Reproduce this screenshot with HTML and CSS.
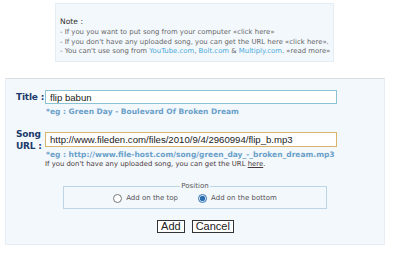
FILE: index.html
```html
<!DOCTYPE html>
<html lang="en">

<head>
    <meta charset="UTF-8">
    <title>Add Song</title>
    <link rel="stylesheet" href="styles.css">
</head>

<body>
    <div class="note">
        <div class="note-title">Note :</div>
        <div class="note-line">- If you you want to put song from your computer &laquo;click here&raquo;</div>
        <div class="note-line">- If you don't have any uploaded song, you can get the URL here &laquo;click here&raquo;.</div>
        <div class="note-line">- You can't use song from <span class="site">YouTube.com</span>, <span class="site">Bolt.com</span> &amp; <span class="site">Multiply.com</span>. &laquo;read more&raquo;</div>
    </div>

    <form class="box" action="#">
        <div class="row">
            <label class="label" for="title">Title :</label>
            <div class="field">
                <input type="text" id="title" class="input" value="flip babun">
                <div class="eg">*eg : Green Day - Boulevard Of Broken Dream</div>
            </div>
        </div>

        <div class="row row-song">
            <label class="label" for="url">Song<br>URL :</label>
            <div class="field">
                <input type="text" id="url" class="input input-focus" value="http://www.fileden.com/files/2010/9/4/2960994/flip_b.mp3">
                <div class="eg">*eg : http://www.file-host.com/song/green_day_-_broken_dream.mp3</div>
                <div class="hint">If you don't have any uploaded song, you can get the URL <u>here</u>.</div>
            </div>
        </div>

        <fieldset class="position">
            <legend>Position</legend>
            <label class="opt"><input type="radio" name="pos"> Add on the top</label>
            <label class="opt"><input type="radio" name="pos" checked> Add on the bottom</label>
        </fieldset>

        <div class="buttons">
            <button type="button" class="btn">Add</button>
            <button type="button" class="btn">Cancel</button>
        </div>
    </form>
</body>

</html>
```

FILE: styles.css
```css
body {
    margin: 0;
    background: #fff;
    font-family: "DejaVu Sans", Verdana, sans-serif;
}

.note {
    box-sizing: border-box;
    margin: 3px 0 0 55px;
    width: 279px;
    height: 59px;
    padding: 13px 0 0 4px;
    background: #f3f8fd;
    border: 1px solid #e4ecf4;
    font-size: 6.9px;
    line-height: 9.3px;
    color: #666;
}

.note-title {
    margin-bottom: 2px;
    font-size: 7.6px;
    color: #333;
}

.site {
    color: #4aa8d8;
}

.box {
    box-sizing: border-box;
    margin: 16px 0 0 5px;
    width: 380px;
    height: 167px;
    padding: 11px 0 0 10px;
    background: #f3f8fd;
    border: 1px solid #e8eef4;
    border-top-color: #d8dee4;
}

.row {
    display: flex;
}

.row-song {
    margin-top: 15px;
}

.label {
    flex: none;
    width: 29px;
    padding-top: 1px;
    white-space: nowrap;
    font-size: 9px;
    font-weight: bold;
    letter-spacing: -0.2px;
    line-height: 12px;
    color: #1c3a6c;
}

.row-song .label {
    margin-top: -5px;
}

.input {
    box-sizing: border-box;
    display: block;
    width: 292px;
    height: 14px;
    margin: 0;
    padding: 0 4px;
    border: 1px solid #8cc2d6;
    font-family: "Liberation Sans", Arial, sans-serif;
    font-size: 9.6px;
    color: #222;
    background: #fff;
}

.input-focus {
    height: 15px;
    border-color: #d9b56a;
}

.eg {
    margin-top: 3px;
    padding-left: 1px;
    font-size: 7.5px;
    font-weight: bold;
    line-height: 10px;
    color: #6aa0c8;
}

.hint {
    font-size: 6.9px;
    line-height: 9px;
    color: #4a3a3a;
}

.position {
    box-sizing: border-box;
    margin: 13px 0 0 47px;
    width: 264px;
    height: 27px;
    padding: 0 0 2px 0;
    border: 1px solid #bcd4e4;
    display: flex;
    justify-content: center;
    gap: 20px;
    align-items: center;
}

.position legend {
    margin: 0 auto;
    padding: 0 1px;
    font-size: 7px;
    color: #555;
}

.opt {
    display: flex;
    align-items: center;
    gap: 4px;
    font-size: 7px;
    color: #555;
}

.opt input {
    margin: 0;
    width: 9px;
    height: 9px;
    accent-color: #2a6fb0;
}

.buttons {
    display: flex;
    justify-content: center;
    gap: 7px;
    margin-top: 11px;
    padding-right: 9px;
}

.btn {
    box-sizing: border-box;
    height: 13px;
    padding: 0 3px;
    border: 1px solid #333;
    border-radius: 0;
    background: #fff;
    font-family: "Liberation Sans", Arial, sans-serif;
    font-size: 11px;
    line-height: 11px;
    color: #222;
}
```
